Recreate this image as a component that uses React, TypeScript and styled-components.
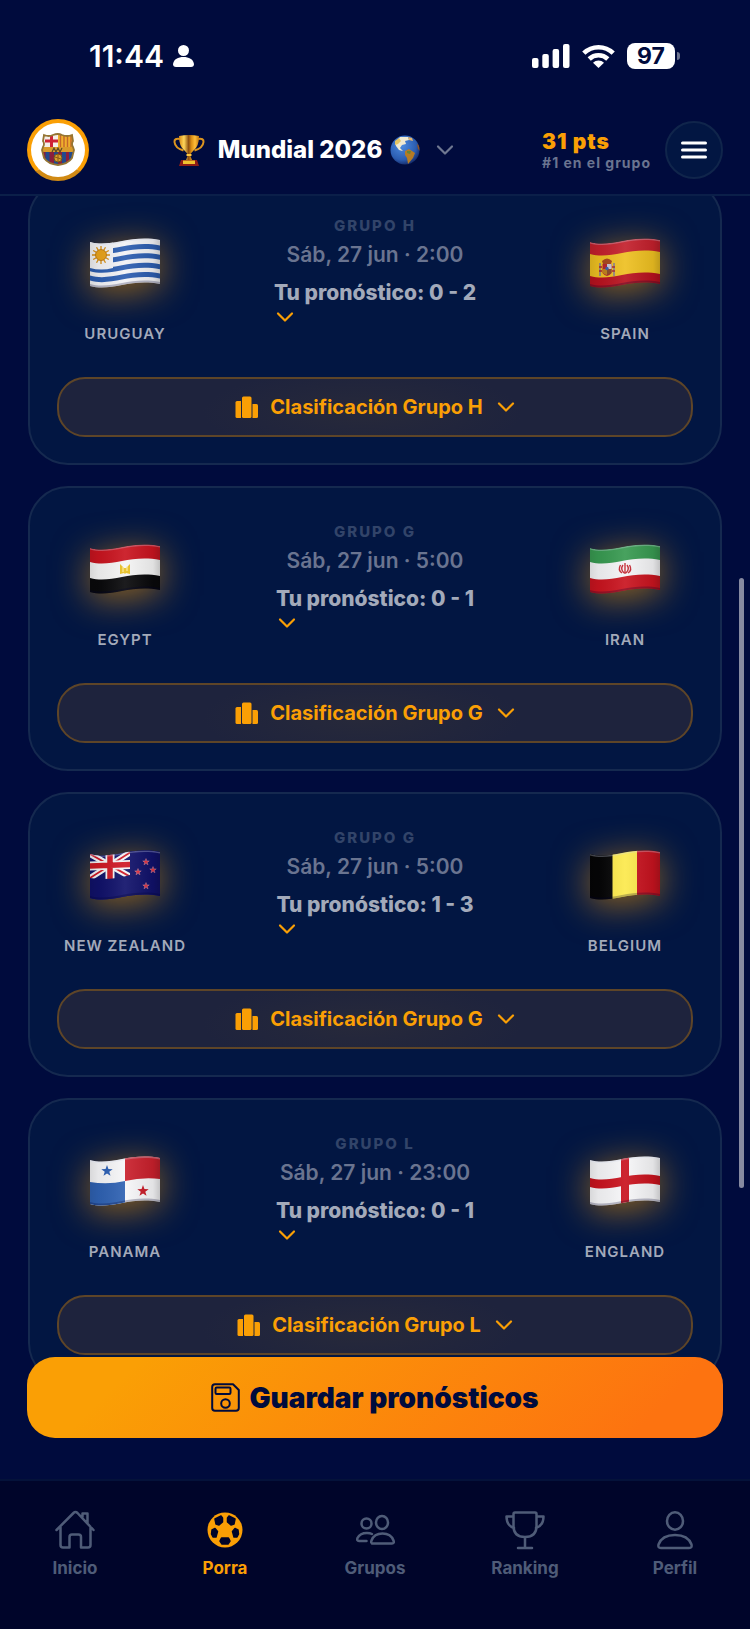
import React from 'react';
import styled, { createGlobalStyle } from 'styled-components';

const color = {
  page: '#000b3d',
  card: '#021642',
  cardLine: '#15294f',
  nav: '#00052a',
  line: '#0b1f49',
  amber: '#fa9f05',
  pill: '#1e233d',
  pillLine: '#5e4528',
  white: '#ffffff',
  soft: '#a3aaba',
  muted: '#6a7490',
  faint: '#324469',
  navText: '#4f5c78',
};

const GlobalStyle = createGlobalStyle`
  * { box-sizing: border-box; }
  body {
    margin: 0;
    background: ${color.page};
    font-family: Inter, "Liberation Sans", sans-serif;
    color: ${color.white};
  }
  button { font: inherit; color: inherit; border: 0; background: none; padding: 0; cursor: pointer; }
  a { color: inherit; text-decoration: none; }
  svg { display: block; flex: none; }
`;

const Screen = styled.div`
  display: flex;
  flex-direction: column;
  height: 100vh;
  overflow: hidden;
`;

const StatusBar = styled.div`
  display: flex;
  justify-content: space-between;
  align-items: center;
  height: 111px;
  padding: 0 70px 0 89px;
`;

const StatusGroup = styled.div<{ $gap: number }>`
  display: flex;
  align-items: center;
  gap: ${p => p.$gap}px;
`;

const Clock = styled.span`
  font-size: 30px;
  line-height: 36px;
  font-weight: 600;
`;

const Battery = styled.span`
  display: flex;
  align-items: center;
  gap: 2px;
  &::after {
    content: '';
    width: 3px;
    height: 8px;
    border-radius: 0 4px 4px 0;
    background: #6e7590;
  }
`;

const BatteryLevel = styled.span`
  width: 48px;
  border-radius: 8px;
  background: ${color.white};
  color: ${color.page};
  font-size: 23px;
  line-height: 26px;
  font-weight: 700;
  text-align: center;
`;

const Header = styled.header`
  display: flex;
  align-items: center;
  height: 85px;
  padding: 0 27px 5px;
  border-bottom: 2px solid ${color.line};
`;

const Crest = styled.button`
  display: flex;
  align-items: center;
  justify-content: center;
  width: 62px;
  height: 62px;
  border: 4px solid ${color.amber};
  border-bottom-color: #d18a14;
  border-radius: 50%;
  background: ${color.white};
`;

const Tournament = styled.button`
  flex: 1;
  display: flex;
  align-items: center;
  justify-content: center;
`;

const Title = styled.span`
  margin: 0 8px 0 13px;
  font-size: 24px;
  line-height: 30px;
  font-weight: 800;
`;

const TitleChevron = styled.span`
  margin-left: 16px;
`;

const Score = styled.div`
  margin: 0 14px 0 4px;
  padding-top: 3px;
`;

const Points = styled.div`
  font-size: 21px;
  line-height: 22px;
  font-weight: 900;
  letter-spacing: 1px;
  color: ${color.amber};
`;

const Rank = styled.div`
  font-size: 14px;
  line-height: 20px;
  font-weight: 700;
  letter-spacing: 1px;
  color: ${color.muted};
`;

const MenuButton = styled.button`
  display: flex;
  align-items: center;
  justify-content: center;
  width: 58px;
  height: 58px;
  border: 2px solid #10254b;
  border-radius: 50%;
  background: ${color.card};
`;

const Main = styled.main`
  position: relative;
  flex: 1;
  min-height: 0;
  overflow: hidden;
  padding: 0 28px;
`;

const MatchList = styled.div`
  display: flex;
  flex-direction: column;
  gap: 21px;
  margin-top: -16px;
`;

const Card = styled.article`
  padding: 27px 27px 26px;
  border: 2px solid ${color.cardLine};
  border-radius: 40px;
  background: ${color.card};
`;

const Teams = styled.div`
  display: grid;
  grid-template-columns: 136px 1fr 136px;
  height: 168px;
`;

const Team = styled.div`
  display: flex;
  flex-direction: column;
  align-items: center;
  gap: 34px;
  padding-top: 29px;
`;

const FlagGlow = styled.div`
  filter: drop-shadow(0 6px 18px rgba(250, 159, 5, 0.6));
`;

const TeamName = styled.div`
  font-size: 15px;
  line-height: 24px;
  font-weight: 600;
  letter-spacing: 1px;
  white-space: nowrap;
  color: ${color.soft};
`;

const Info = styled.div`
  display: flex;
  flex-direction: column;
  align-items: center;
  padding-top: 7px;
`;

const Group = styled.div`
  font-size: 15px;
  line-height: 20px;
  font-weight: 800;
  letter-spacing: 2px;
  color: ${color.faint};
`;

const Kickoff = styled.div`
  margin-top: 5px;
  font-size: 21px;
  line-height: 28px;
  font-weight: 600;
  color: ${color.muted};
`;

const Prediction = styled.button`
  margin-top: 10px;
  font-size: 21px;
  line-height: 28px;
  font-weight: 800;
  text-align: left;
  color: ${color.soft};
  svg { margin: 1px 0 0 2px; }
`;

const StandingsButton = styled.button`
  display: flex;
  align-items: center;
  justify-content: center;
  gap: 11px;
  width: 100%;
  height: 60px;
  border: 2px solid ${color.pillLine};
  border-radius: 28px;
  background: radial-gradient(ellipse 160px 44px at 48% 60%, #27293a, ${color.pill});
  font-size: 20px;
  line-height: 24px;
  font-weight: 700;
  color: ${color.amber};
  svg:last-child { margin-left: 3px; }
`;

const ScrollThumb = styled.div`
  position: absolute;
  top: 29.8%;
  right: 6px;
  width: 5px;
  height: 47.5%;
  border-radius: 3px;
  background: #868aa1;
`;

const SaveBar = styled.div`
  position: absolute;
  left: 27px;
  right: 27px;
  bottom: 41px;
`;

const SaveButton = styled.button`
  display: flex;
  align-items: center;
  justify-content: center;
  gap: 9px;
  width: 100%;
  height: 81px;
  border-radius: 28px;
  background: linear-gradient(135deg, #fa9f05 15%, #fd7310 88%);
  font-size: 28px;
  line-height: 34px;
  font-weight: 900;
  color: ${color.page};
`;

const NavBar = styled.nav`
  display: grid;
  grid-template-columns: repeat(5, 1fr);
  height: 150px;
  padding-top: 29px;
  border-top: 2px solid #04123a;
  background: ${color.nav};
`;

const NavLink = styled.a<{ $active?: boolean }>`
  display: flex;
  flex-direction: column;
  align-items: center;
  gap: 6px;
  font-size: 17px;
  line-height: 24px;
  font-weight: 700;
  color: ${p => (p.$active ? color.amber : color.navText)};
`;

/* ---------- flags ---------- */

const band = (y: number, h: number) =>
  `M0 ${y}c22 6 40 -8 70 -2v${h}c-30 -6 -48 8 -70 2z`;

const star = (cx: number, cy: number, r: number) =>
  Array.from({ length: 10 }, (_, i) => {
    const a = (Math.PI / 5) * i - Math.PI / 2;
    const q = i % 2 ? r * 0.4 : r;
    return `${cx + q * Math.cos(a)},${cy + q * Math.sin(a)}`;
  }).join(' ');

const Tricolor = ({ a, b, c }: { a: string; b: string; c: string }) => (
  <>
    <path d={band(4, 15)} fill={a} />
    <path d={band(18, 17)} fill={b} />
    <path d={band(34, 16)} fill={c} />
  </>
);

const flagArt: Record<string, React.ReactNode> = {
  uruguay: (
    <>
      <rect width="70" height="50" fill="#f3f3f6" />
      {[8.5, 17.8, 27.2, 36.6].map(y => <path key={y} d={band(y + 1, 5)} fill="#2c5db0" />)}
      <path d="M0 4q11 3 23 0v26q-12 3-23 0z" fill="#f3f3f6" />
      <g stroke="#d98f12" strokeWidth="1.3">
        {Array.from({ length: 12 }, (_, i) => {
          const a = (Math.PI / 6) * i;
          return <line key={i} x1="11" y1="17" x2={11 + 9 * Math.cos(a)} y2={17 + 9 * Math.sin(a)} />;
        })}
      </g>
      <circle cx="11" cy="17" r="5.5" fill="#e9a31b" stroke="#b9740c" strokeWidth=".8" />
    </>
  ),
  spain: (
    <>
      <Tricolor a="#c3202c" b="#eebb1c" c="#b8121f" />
      <path d={band(16, 22)} fill="#eec021" />
      <g transform="translate(17 29)">
        <path d="M-7-4v13M7-4v13" stroke="#9a8b7c" strokeWidth="2" />
        <path d="M-8 0h3M5 0h3M-8 4h3M5 4h3" stroke="#a9232b" strokeWidth="1.4" />
        <path d="M-5-6q5-5 10 0l-1 3h-8z" fill="#a8461c" />
        <path d="M-4.500-3h9v9q-4.500 6-9 0z" fill="#b6222d" />
        <path d="M0-3h4.500v5H0z" fill="#c9c4d6" />
        <path d="M-4.500 2H0v6q-4-1-4.500-3z" fill="#c0801a" />
        <path d="M0 2h4.500v4L0 8z" fill="#8d4a28" />
        <circle cy="1.500" r="1.700" fill="#375eac" />
      </g>
    </>
  ),
  egypt: (
    <>
      <Tricolor a="#c9141f" b="#f4f4f4" c="#09090b" />
      <path d="M30 20l4 4h2l4-4v10l-4-1-1 1-1-1-4 1z" fill="#e8c022" />
      <path d="M33 23v5M37 22v5" stroke="#fff3b0" strokeWidth="1" />
    </>
  ),
  iran: (
    <>
      <Tricolor a="#389a51" b="#f4f4f6" c="#c9141f" />
      <g fill="none" stroke="#c32530" strokeWidth="1.400">
        <path d="M35 19v11M33 21q-3 4 1 8M37 21q3 4-1 8M30.500 21q-3 5 1.500 8M39.500 21q3 5-1.500 8" />
      </g>
    </>
  ),
  newZealand: (
    <>
      <rect width="70" height="50" fill="#10146b" />
      <g transform="translate(0 4) skewY(-2)">
        <path d="M0 0L40 24M40 0L0 24" stroke="#f4f4f6" strokeWidth="6" />
        <path d="M0 0L40 24M40 0L0 24" stroke="#cf1825" strokeWidth="1.800" />
        <path d="M20-2v28M0 12h40" stroke="#f4f4f6" strokeWidth="9" />
        <path d="M20-2v28M0 12h40" stroke="#cf1825" strokeWidth="5.500" />
      </g>
      <path d="M40 0h30v50H0V28q20 3 40-3z" fill="#10116a" />
      {[[56, 12], [48, 22], [63, 20], [56, 36]].map(([x, y]) => (
        <polygon key={x + y} points={star(x, y, 3.4)} fill="#e5303f" stroke="#d08aa0" strokeWidth=".5" />
      ))}
    </>
  ),
  belgium: (
    <>
      <rect width="23" height="50" fill="#050506" />
      <rect x="22.500" width="25" height="50" fill="#fce94c" />
      <rect x="47" width="23" height="50" fill="#c7131f" />
    </>
  ),
  panama: (
    <>
      <rect width="70" height="50" fill="#f6f6f8" />
      <path d="M35 0h35v23q-17-2-35 2z" fill="#c9202c" />
      <path d="M0 26q18 3 35 -1v25H0z" fill="#2f62b3" />
      <polygon points={star(17, 15, 6)} fill="#2b5fb4" />
      <polygon points={star(53, 35, 6)} fill="#c81a27" />
    </>
  ),
  england: (
    <>
      <rect width="70" height="50" fill="#f6f6f8" />
      <path d={band(22, 9)} fill="#c9131e" />
      <rect x="31" width="8" height="50" fill="#c9131e" />
    </>
  ),
};

const Flag = ({ name }: { name: string }) => (
  <svg width="70" height="50" viewBox="0 0 70 50" aria-hidden="true">
    <defs>
      <clipPath id={`wave-${name}`}><path d={band(4, 44)} /></clipPath>
      <linearGradient id={`fold-${name}`}>
        <stop offset="0" stopColor="#000" stopOpacity=".12" />
        <stop offset=".12" stopColor="#000" stopOpacity=".06" />
        <stop offset=".5" stopColor="#fff" stopOpacity=".08" />
        <stop offset=".9" stopColor="#000" stopOpacity=".08" />
        <stop offset="1" stopColor="#000" stopOpacity=".2" />
      </linearGradient>
    </defs>
    <g clipPath={`url(#wave-${name})`}>
      {flagArt[name]}
      <rect width="70" height="50" fill={`url(#fold-${name})`} />
      <path d={band(4, 1.5)} fill="#ccd3e8" opacity=".3" />
      <path d={band(46, 2)} fill="#000030" opacity=".25" />
    </g>
  </svg>
);

/* ---------- icons ---------- */

const Chevron = ({ stroke = color.amber }: { stroke?: string }) => (
  <svg width="18" height="18" viewBox="0 0 18 18" fill="none" stroke={stroke} strokeWidth="2.200" strokeLinecap="round" strokeLinejoin="round" aria-hidden="true">
    <path d="M2 5.500l7 7 7-7" />
  </svg>
);

const Person = () => (
  <svg width="21" height="22" viewBox="0 0 21 22" fill="#fff" aria-hidden="true">
    <circle cx="10.500" cy="5.500" r="5.500" />
    <path d="M0 19c1-5 5-7 10.500-7S20 14 21 19q0 3-3 3H3q-3 0-3-3z" />
  </svg>
);

const Signal = () => (
  <svg width="38" height="24" viewBox="0 0 38 24" fill="#fff" aria-hidden="true">
    <rect y="14" width="6.500" height="10" rx="2" />
    <rect x="10.300" y="10" width="6.500" height="14" rx="2" />
    <rect x="20.600" y="5" width="6.500" height="19" rx="2" />
    <rect x="31" width="6.500" height="24" rx="2" />
  </svg>
);

const Wifi = () => (
  <svg width="33" height="24" viewBox="0 0 33 24" fill="none" stroke="#fff" strokeWidth="4.600" aria-hidden="true">
    <path d="M1.800 9.200a21 21 0 0 1 29.400 0" />
    <path d="M7.200 15a13.500 13.500 0 0 1 18.600 0" />
    <path d="M11 18.700a8 8 0 0 1 11 0L16.500 24z" fill="#fff" stroke="none" />
  </svg>
);

const ClubCrest = () => (
  <svg width="34" height="34" viewBox="0 0 34 34" aria-hidden="true">
    <defs>
      <clipPath id="crest">
        <path d="M3 2q5 2 9 0 5-2 9 0 5 2 10 0l1 6q-2 3 0 6l1 3-2 8q-4 6-14 7Q7 31 3 25L1 17l1-3q2-3 0-6z" />
      </clipPath>
    </defs>
    <g clipPath="url(#crest)">
      <rect width="34" height="34" fill="#8a1f3d" />
      <rect width="17" height="14" fill="#f4efe8" />
      <path d="M10.500 2v12M4 8h13" stroke="#ce2236" strokeWidth="3" />
      <rect x="17" width="17" height="14" fill="#efb02c" />
      <path d="M19.500 2v12M23 2v12M26.500 2v12M30 2v12" stroke="#c4662b" strokeWidth="1.400" />
      <path d="M6.500 19v15M15 19v15M23 19v15M30 19v15" stroke="#22498d" strokeWidth="4" />
      <rect y="14" width="34" height="5" fill="#d99b2b" />
      <path d="M11 19l2-4 2 4 2-4 2 4 2-4" stroke="#5b4a25" strokeWidth="1.200" fill="none" />
      <circle cx="17" cy="25" r="4" fill="#d99b2b" stroke="#6d5720" />
      <path d="M14 24l6 2M17 21v8" stroke="#8b5b16" />
    </g>
    <path d="M3 2q5 2 9 0 5-2 9 0 5 2 10 0l1 6q-2 3 0 6l1 3-2 8q-4 6-14 7Q7 31 3 25L1 17l1-3q2-3 0-6z" fill="none" stroke="#957533" strokeWidth="1.800" />
  </svg>
);

const GoldTrophy = () => (
  <svg width="32" height="31" viewBox="0 0 32 31" aria-hidden="true">
    <defs>
      <linearGradient id="gold">
        <stop offset="0" stopColor="#d78a16" />
        <stop offset=".25" stopColor="#ffd65a" />
        <stop offset=".48" stopColor="#8e4f10" />
        <stop offset=".62" stopColor="#d98d14" />
        <stop offset=".8" stopColor="#ffbe38" />
        <stop offset="1" stopColor="#c47a12" />
      </linearGradient>
    </defs>
    <path d="M7 4Q1 3 1.500 7 2 13 10.500 15.500M25 4q6-1 5.500 3-.5 6-9 8.500" fill="none" stroke="#dc951f" strokeWidth="2" />
    <path d="M6 1q10-2 20 0 0 10-5 14-3 3-4 5l2 5h-6l2-5q-1-2-4-5Q6 11 6 1z" fill="url(#gold)" />
    <path d="M13.500 19h5v2h-5z" fill="#ffc942" />
    <path d="M8 25h16l2 6H6z" fill="#8f1d16" />
    <rect x="10" y="25.500" width="12" height="3.500" fill="#f0c22f" />
  </svg>
);

const Globe = () => (
  <svg width="30" height="30" viewBox="0 0 30 30" aria-hidden="true">
    <defs>
      <radialGradient id="ocean" cx=".4" cy=".35" r=".7">
        <stop offset="0" stopColor="#4c8be0" />
        <stop offset=".7" stopColor="#2b5cb0" />
        <stop offset="1" stopColor="#122460" />
      </radialGradient>
      <clipPath id="sphere"><circle cx="15" cy="15" r="14.500" /></clipPath>
    </defs>
    <circle cx="15" cy="15" r="14.500" fill="url(#ocean)" />
    <g clipPath="url(#sphere)">
      <path d="M5 8L10 2l8 0 1 3-4 1 1 3-4 1-2 3 3 3-4-1-3-4z" fill="#f0ead2" />
      <path d="M5 6l4-3 2 3-3 3-3 1z" fill="#e5c562" />
      <path d="M18 2l4 1 1 3-4-1z" fill="#e4b46b" />
      <path d="M15 16l4-2 6 4-2 5-5 6-1-6-2-3z" fill="#b47b25" />
      <path d="M17 16l4 0-1 3-3-1z" fill="#698434" />
      <path d="M27 9l3 2v5l-2-2z" fill="#8f5426" />
    </g>
  </svg>
);

const Burger = () => (
  <svg width="26" height="20" viewBox="0 0 26 20" stroke="#fff" strokeWidth="3" strokeLinecap="round" aria-hidden="true">
    <path d="M1.500 3h23M1.500 10h23M1.500 17h23" />
  </svg>
);

const Podium = () => (
  <svg width="24" height="24" viewBox="0 0 24 24" fill={color.amber} aria-hidden="true">
    <path d="M2 6h4v17H2q-1.500 0-1.500-1.500v-14Q.5 6 2 6z" />
    <rect x="7" y="1.500" width="9.500" height="21.500" rx="1.500" />
    <path d="M17.500 9h4q1.500 0 1.500 1.500v11q0 1.500-1.500 1.500h-4z" />
  </svg>
);

const Floppy = () => (
  <svg width="29" height="29" viewBox="0 0 29 29" fill="none" stroke={color.page} strokeWidth="2" strokeLinejoin="round" aria-hidden="true">
    <path d="M4 1.200h18l5.800 5.800v18q0 2.800-2.800 2.800H4q-2.800 0-2.800-2.800V4Q1.200 1.200 4 1.200z" />
    <rect x="4.500" y="4.500" width="15" height="6.500" rx="1.200" />
    <circle cx="14.500" cy="20.500" r="4.300" />
  </svg>
);

const NavSvg = ({ children }: { children: React.ReactNode }) => (
  <svg width="40" height="40" viewBox="0 0 40 40" fill="none" stroke="currentColor" strokeWidth="2.500" strokeLinecap="round" strokeLinejoin="round" aria-hidden="true">
    {children}
  </svg>
);

const navItems = [
  {
    label: 'Inicio',
    icon: (
      <NavSvg>
        <path d="M1.500 20L18.500 3q2-2 4 0L38.500 20M5.500 17v18q0 2.500 2.500 2.500h6.500V27q0-2.500 2.500-2.500h6.500q2.500 0 2.500 2.500v10.500H33q2.500 0 2.500-2.500V17M27.500 7V3.500h5V13" />
      </NavSvg>
    ),
  },
  {
    label: 'Porra',
    active: true,
    icon: (
      <NavSvg>
        <circle cx="20" cy="20" r="17.500" fill="currentColor" stroke="none" />
        <g fill={color.nav} stroke={color.nav} strokeWidth="1.500">
          <path d="M10 9l6-3 1.500 2v4L14 15l-3-1z" />
          <path d="M30 9l-6-3-1.500 2v4L26 15l3-1z" />
          <path d="M7 20l3-1.500L12.500 21.500l-1.500 5.500H8l-1.500-3z" />
          <path d="M33 20l-3-1.500L27.500 21.500l1.500 5.500H32l1.500-3z" />
          <path d="M16.500 28h7l1.500 3-2 3h-6l-2-3z" />
        </g>
      </NavSvg>
    ),
  },
  {
    label: 'Grupos',
    icon: (
      <NavSvg>
        <circle cx="11.500" cy="13.500" r="5" />
        <ellipse cx="27" cy="12.500" rx="6" ry="6.500" />
        <path d="M11.500 31H4q-2.500 0-1.500-3Q5 23 12 23q3 0 5 1M17 33.500h20q2.500 0 1.500-3-2.500-7-11-7t-11 7q-1 3 1.500 3z" />
      </NavSvg>
    ),
  },
  {
    label: 'Ranking',
    icon: (
      <NavSvg>
        <path d="M8.500 4q0-1.500 1.500-1.500h20q1.500 0 1.500 1.500v12q0 11-11.500 11T8.500 16zM8.500 6.500h-7q0 9 7.500 11.500M31.500 6.500h7q0 9-7.500 11.500M20 27v10.500M13 38h14" />
      </NavSvg>
    ),
  },
  {
    label: 'Perfil',
    icon: (
      <NavSvg>
        <ellipse cx="20" cy="11" rx="8" ry="8.700" />
        <path d="M6 38h28q3.500 0 2.500-3.500Q33 25 20 25T3.500 34.500Q2.500 38 6 38z" />
      </NavSvg>
    ),
  },
];

interface Match {
  group: string;
  date: string;
  score: string;
  home: [string, string];
  away: [string, string];
}

const matches: Match[] = [
  { group: 'H', date: 'Sáb, 27 jun · 2:00', score: '0 - 2', home: ['URUGUAY', 'uruguay'], away: ['SPAIN', 'spain'] },
  { group: 'G', date: 'Sáb, 27 jun · 5:00', score: '0 - 1', home: ['EGYPT', 'egypt'], away: ['IRAN', 'iran'] },
  { group: 'G', date: 'Sáb, 27 jun · 5:00', score: '1 - 3', home: ['NEW ZEALAND', 'newZealand'], away: ['BELGIUM', 'belgium'] },
  { group: 'L', date: 'Sáb, 27 jun · 23:00', score: '0 - 1', home: ['PANAMA', 'panama'], away: ['ENGLAND', 'england'] },
];

const TeamBlock = ({ team: [label, flag] }: { team: [string, string] }) => (
  <Team>
    <FlagGlow><Flag name={flag} /></FlagGlow>
    <TeamName>{label}</TeamName>
  </Team>
);

const MatchCard = ({ match }: { match: Match }) => (
  <Card>
    <Teams>
      <TeamBlock team={match.home} />
      <Info>
        <Group>GRUPO {match.group}</Group>
        <Kickoff>{match.date}</Kickoff>
        <Prediction>
          Tu pronóstico: {match.score}
          <Chevron />
        </Prediction>
      </Info>
      <TeamBlock team={match.away} />
    </Teams>
    <StandingsButton>
      <Podium />
      Clasificación Grupo {match.group}
      <Chevron />
    </StandingsButton>
  </Card>
);

export default function App() {
  return (
    <Screen>
      <GlobalStyle />
      <StatusBar>
        <StatusGroup $gap={9}>
          <Clock>11:44</Clock>
          <Person />
        </StatusGroup>
        <StatusGroup $gap={12}>
          <Signal />
          <Wifi />
          <Battery><BatteryLevel>97</BatteryLevel></Battery>
        </StatusGroup>
      </StatusBar>
      <Header>
        <Crest aria-label="Club"><ClubCrest /></Crest>
        <Tournament>
          <GoldTrophy />
          <Title>Mundial 2026</Title>
          <Globe />
          <TitleChevron><Chevron stroke="#6f7891" /></TitleChevron>
        </Tournament>
        <Score>
          <Points>31 pts</Points>
          <Rank>#1 en el grupo</Rank>
        </Score>
        <MenuButton aria-label="Menú"><Burger /></MenuButton>
      </Header>
      <Main>
        <MatchList>
          {matches.map(m => <MatchCard key={m.home[0]} match={m} />)}
        </MatchList>
        <SaveBar>
          <SaveButton><Floppy />Guardar pronósticos</SaveButton>
        </SaveBar>
        <ScrollThumb />
      </Main>
      <NavBar>
        {navItems.map(item => (
          <NavLink key={item.label} href={`#${item.label.toLowerCase()}`} $active={item.active}>
            {item.icon}
            {item.label}
          </NavLink>
        ))}
      </NavBar>
    </Screen>
  );
}
